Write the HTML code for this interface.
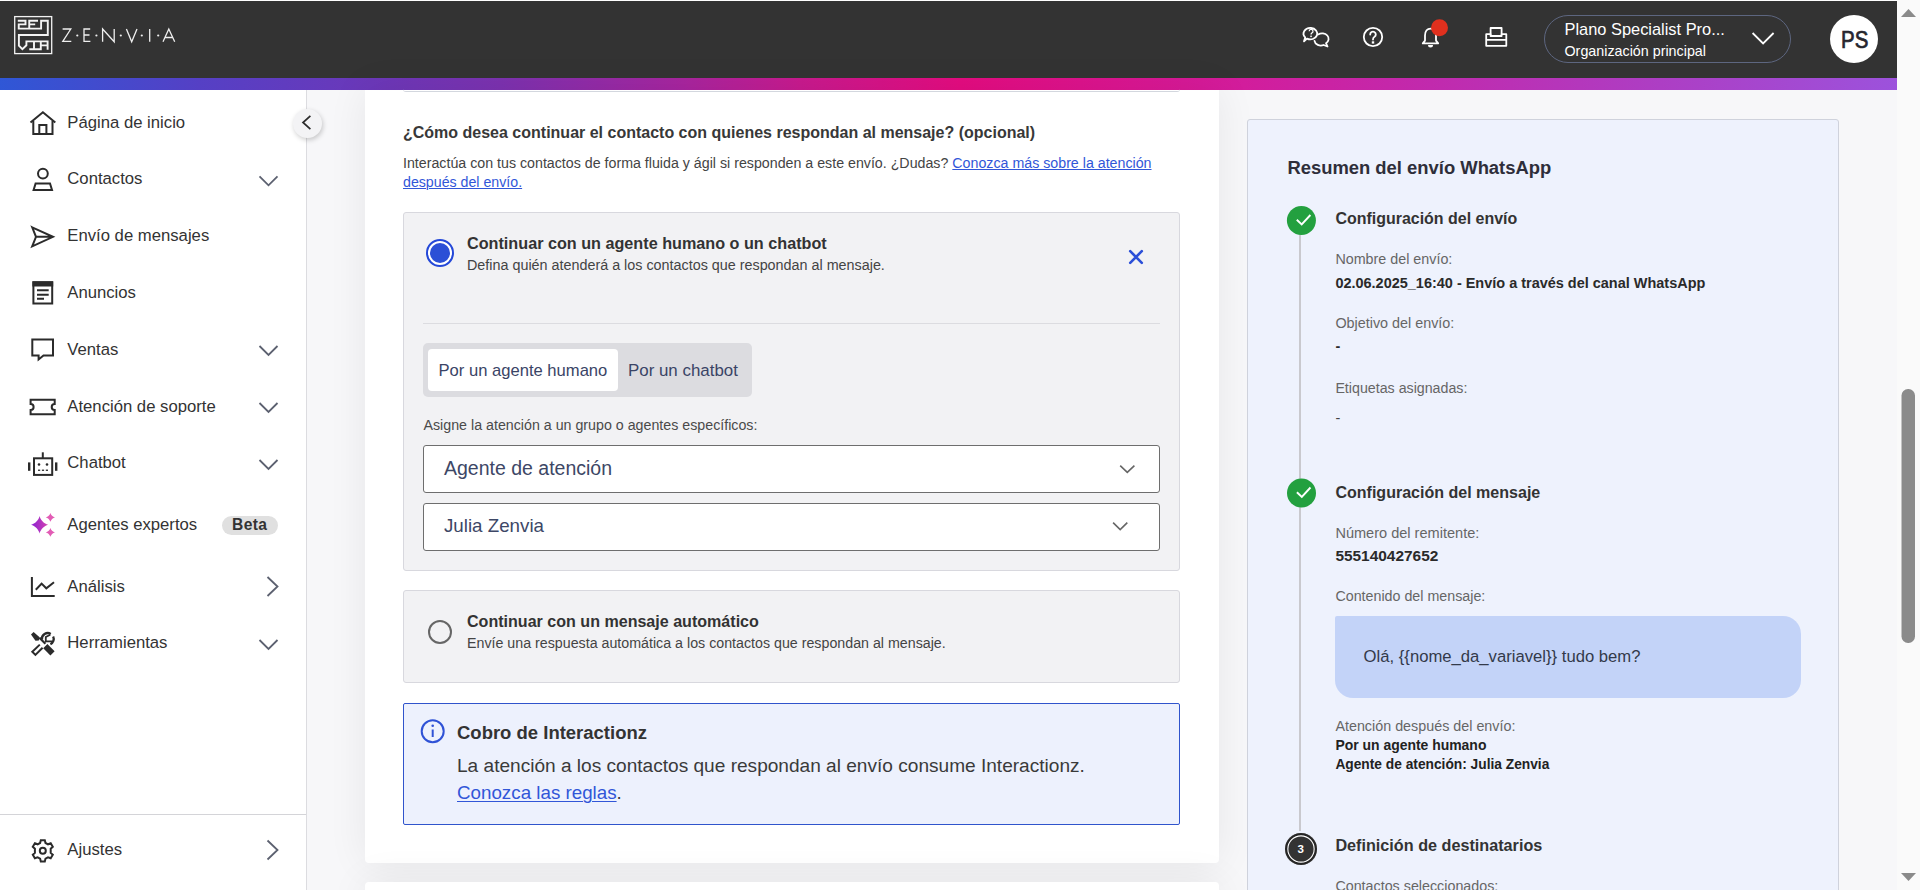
<!DOCTYPE html>
<html><head><meta charset="utf-8"><style>
*{box-sizing:border-box;margin:0;padding:0}
html,body{width:1920px;height:890px;overflow:hidden;background:#fff;font-family:"Liberation Sans",sans-serif;color:#333}
.a{position:absolute}
.t{position:absolute;white-space:nowrap;line-height:1}
svg{position:absolute;left:0;top:0;overflow:visible}
a{color:inherit}
</style></head><body>
<div class="a" style="left:0px;top:1px;width:1897px;height:77px;background:#333333"></div>
<div class="a" style="left:0px;top:78px;width:1897px;height:12px;background:linear-gradient(90deg,#2f57d6 0%,#5540c5 10.5%,#7c32b0 26.4%,#a8259f 36%,#c81a8e 42.2%,#e40c80 50.6%,#d61a98 63.3%,#c12aad 75.4%,#ad3ec4 87.5%,#9c52dc 100%)"></div>
<div class="a" style="left:0px;top:90px;width:306px;height:800px;background:#fff"></div>
<div class="a" style="left:306px;top:90px;width:1px;height:800px;background:#dcdce0"></div>
<div class="a" style="left:307px;top:90px;width:1590px;height:800px;background:#f7f7f9"></div>
<div class="a" style="left:1897px;top:0px;width:23px;height:890px;background:#fafafa"></div>
<svg width="1920" height="890" style="pointer-events:none"><path d="M1901,17 L1908.5,9 L1916,17 Z" fill="#8a8a8a"/><path d="M1901,873 L1908.5,881 L1916,873 Z" fill="#8a8a8a"/><rect x="1901.5" y="389" width="13.5" height="254" rx="6.5" fill="#8b8b8b"/></svg>
<svg width="1920" height="890"><g fill="none" stroke="#f2f2f2" stroke-width="1.3"><rect x="14.7" y="16.6" width="37" height="37"/></g><g fill="none" stroke="#f4f4f4" stroke-width="1.9" stroke-linejoin="miter" stroke-linecap="butt"><path d="M17.8,20.75 H25.5 V24.4 H18.75 V28.6 H41.1 V20.75 H47.8 V35 H18.9 V45.6 L22.4,49.2 L26.4,45.3 V41.4 H47.6 V49.8"/><path d="M38,20.75 H29.25 V28.6 M29.25,24.4 H35.2"/><path d="M34,41.4 V49.3 M29.3,49.3 H40.8 V41.4 M40.8,45.35 H47.6"/></g><g fill="none" stroke="#efefef" stroke-width="1.3" stroke-linejoin="miter"><path d="M62.6,29 H70.8 L62.8,41.3 H71.3"/><path d="M90.2,29 H84 V41.3 H90.4 M84,35 H89.5"/><path d="M102.6,41.8 V29 L114.2,41.8 V29"/><path d="M126.4,29 L131.7,41.8 L137,29"/><path d="M149.7,29 V41.8"/><path d="M163,41.8 L168.8,29 L174.7,41.8 M165.2,37.5 H172.5"/></g><g fill="#efefef"><circle cx="77.3" cy="35.5" r="1.1"/><circle cx="96.4" cy="35.5" r="1.1"/><circle cx="120.8" cy="35.5" r="1.1"/><circle cx="141.8" cy="35.5" r="1.1"/><circle cx="158.2" cy="35.5" r="1.1"/></g></svg>
<svg width="1920" height="890"><g fill="none" stroke="#fff" stroke-width="1.8" stroke-linejoin="round" stroke-linecap="round"><path d="M1311,28 A6.8,5.7 0 1 1 1307,38.6 L1304,41.3 L1305.2,37.4 A6.8,5.7 0 0 1 1311,28 Z"/><path d="M1318.2,34.4 A6.4,5.4 0 0 1 1326,43.2 L1327.5,46.5 L1323.6,45 A6.4,5.4 0 0 1 1314.5,40.8"/><circle cx="1373" cy="37" r="9.2"/><path d="M1370.2,34.5 A2.8,2.8 0 1 1 1374.5,36.8 C1373.3,37.5 1373,38 1373,39.5"/><path d="M1422.8,43.4 L1425,40.6 V35.5 C1425,31.2 1427.4,28.6 1430.5,28.6 C1433.6,28.6 1436,31.2 1436,35.5 V40.6 L1438.2,43.4 Z"/><rect x="1490.6" y="28" width="11" height="8"/><path d="M1490.6,34.2 H1486.2 V45.8 H1506.3 V34.2 H1501.6 M1486.2,39.9 H1506.3"/></g><g fill="#fff"><path d="M1371.8,41.3 h2.4 v2.3 h-2.4z"/><path d="M1309.2,31.3 a1.9,1.9 0 1 1 2.5,1.8 c-.5,.3 -.6,.6 -.6,1.4" fill="none" stroke="#fff" stroke-width="1.3"/><rect x="1310.3" y="35.6" width="1.5" height="1.5"/><path d="M1428,45 h5 a2.5,2.5 0 0 1 -5,0z"/></g><circle cx="1439.5" cy="27.8" r="8.5" fill="#e0301e"/></svg>
<div class="a" style="left:1544px;top:15px;width:247px;height:48px;border:1px solid #5d6680;border-radius:24px"></div>
<div class="t" style="left:1564.5px;top:21.42px;font-size:16.4px;font-weight:400;color:#ffffff;">Plano Specialist Pro...</div>
<div class="t" style="left:1564.5px;top:43.90px;font-size:14.3px;font-weight:400;color:#ffffff;">Organización principal</div>
<svg width="1920" height="890"><path d="M1752.6,33 L1763.1,43.4 L1773.6,33" fill="none" stroke="#fff" stroke-width="1.8"/></svg>
<div class="a" style="left:1830px;top:14.7px;width:48px;height:48px;background:#fff;border-radius:50%"></div>
<div class="t" style="left:1840.5px;top:28.71px;font-size:23.5px;font-weight:400;color:#26262e;transform:scaleX(0.87);transform-origin:0 0;-webkit-text-stroke:0.7px #26262e">PS</div>
<div class="t" style="left:67.3px;top:114.86px;font-size:16.7px;font-weight:400;color:#333333;">Página de inicio</div>
<div class="t" style="left:67.3px;top:170.86px;font-size:16.7px;font-weight:400;color:#333333;">Contactos</div>
<div class="t" style="left:67.3px;top:227.86px;font-size:16.7px;font-weight:400;color:#333333;">Envío de mensajes</div>
<div class="t" style="left:67.3px;top:284.86px;font-size:16.7px;font-weight:400;color:#333333;">Anuncios</div>
<div class="t" style="left:67.3px;top:341.86px;font-size:16.7px;font-weight:400;color:#333333;">Ventas</div>
<div class="t" style="left:67.3px;top:398.86px;font-size:16.7px;font-weight:400;color:#333333;">Atención de soporte</div>
<div class="t" style="left:67.3px;top:454.86px;font-size:16.7px;font-weight:400;color:#333333;">Chatbot</div>
<div class="t" style="left:67.3px;top:516.86px;font-size:16.7px;font-weight:400;color:#333333;">Agentes expertos</div>
<div class="t" style="left:67.3px;top:578.86px;font-size:16.7px;font-weight:400;color:#333333;">Análisis</div>
<div class="t" style="left:67.3px;top:634.86px;font-size:16.7px;font-weight:400;color:#333333;">Herramientas</div>
<div class="t" style="left:67.3px;top:841.86px;font-size:16.7px;font-weight:400;color:#333333;">Ajustes</div>
<div class="a" style="left:0px;top:814px;width:306px;height:1px;background:#d4d4d8"></div>
<div class="a" style="left:222px;top:516px;width:56px;height:19px;background:#e0e0e0;border-radius:10px"></div>
<div class="t" style="left:232px;top:517.29px;font-size:15.6px;font-weight:700;color:#333333;letter-spacing:0.4px">Beta</div>
<svg width="1920" height="890"><g fill="none" stroke="#2b2b2b" stroke-width="2" stroke-linejoin="miter"><path d="M30.5,122.5 L42.9,112.2 L55.3,122.5"/><path d="M33.3,121 V134 H52.5 V121"/><path d="M39.3,134 V125 H46.4 V134"/><circle cx="42.9" cy="173.6" r="4.9"/><path d="M35.6,183.4 H50 L52,190 H33.6 Z"/><path d="M32.2,227.3 L53,236.8 L32.2,246.3 L36,236.8 Z M36,236.8 H53"/><rect x="33.4" y="282.3" width="18.8" height="21.2"/><path d="M37,290.2 H48.7 M37,294.8 H48.7 M37,298.8 H44"/><path d="M32.3,339.4 H53 V355.5 H43.5 L38.6,359.5 V355.5 H32.3 Z"/><path d="M30.6,399.8 H54.7 V404 A3,3 0 0 0 54.7,410 V414.2 H30.6 V410 A3,3 0 0 0 30.6,404 Z"/><rect x="34" y="458.3" width="18.2" height="16.6"/><path d="M42.8,452.3 V458.3"/><path d="M31.9,577 V596 H54.7"/><path d="M35.8,589.8 L41.6,583.6 L46.3,588.3 L54,582.2"/></g><g fill="#2b2b2b"><rect x="28" y="462.4" width="2.4" height="8.4"/><rect x="55" y="462.4" width="2.4" height="8.4"/><circle cx="39" cy="464.5" r="1.3"/><circle cx="47" cy="464.5" r="1.3"/><rect x="38" y="469.6" width="2.2" height="1.3"/><rect x="41.9" y="469.6" width="2.2" height="1.3"/><rect x="45.8" y="469.6" width="2.2" height="1.3"/><rect x="32.4" y="281.3" width="20.8" height="5.2"/></g><g fill="#2b2b2b"><path d="M31,634.6 L33.6,632.1 L39.6,637.3 L38.8,640.6 L35.5,640.7 Z"/><path d="M38.6,638.6 L40.2,637 L46.2,643 L44.6,644.6 Z"/><path d="M43.2,648.2 L47.4,644.1 L54.6,651.3 L50.4,655.5 Z"/></g><g fill="none" stroke="#2b2b2b" stroke-width="2.3"><path d="M41.9,639.6 A5.9,5.9 0 0 1 50.75,633.9 M53.15,636.5 A5.9,5.9 0 0 1 50.4,644.3"/></g><g fill="none" stroke="#2b2b2b" stroke-width="1.8"><path d="M50.3,634.8 L45.8,637 V641.4 H52.6"/></g><g fill="none" stroke="#2b2b2b" stroke-width="2"><path d="M39.8,644.6 L32.3,651.8 L35.4,654.9 L42.6,647.7"/></g><g fill="none" stroke="#2b2b2b" stroke-width="2" stroke-linejoin="miter"><circle cx="42.8" cy="850.8" r="3"/><path d="M40.8,840.2 H44.8 L45.5,843 L48,844.3 L50.7,843.3 L52.8,846.8 L50.7,848.7 V852.9 L52.8,854.8 L50.7,858.3 L48,857.3 L45.5,858.6 L44.8,861.4 H40.8 L40.1,858.6 L37.6,857.3 L34.9,858.3 L32.8,854.8 L34.9,852.9 V848.7 L32.8,846.8 L34.9,843.3 L37.6,844.3 L40.1,843 Z"/></g><defs><linearGradient id="sg" x1="0" y1="0" x2="1" y2="0"><stop offset="0" stop-color="#8a22d2"/><stop offset="1" stop-color="#d443b2"/></linearGradient></defs><path d="M39.60,516.00 C40.45,519.96 44.28,523.92 48.10,524.80 C44.28,525.68 40.45,529.64 39.60,533.60 C38.75,529.64 34.92,525.68 31.10,524.80 C34.92,523.92 38.75,519.96 39.60,516.00 Z" fill="url(#sg)"/><path d="M50.40,513.00 C50.86,514.98 52.93,516.96 55.00,517.40 C52.93,517.84 50.86,519.82 50.40,521.80 C49.94,519.82 47.87,517.84 45.80,517.40 C47.87,516.96 49.94,514.98 50.40,513.00 Z" fill="#e25cb5"/><path d="M50.40,528.00 C50.86,529.98 52.93,531.96 55.00,532.40 C52.93,532.84 50.86,534.82 50.40,536.80 C49.94,534.82 47.87,532.84 45.80,532.40 C47.87,531.96 49.94,529.98 50.40,528.00 Z" fill="#e25cb5"/><g fill="none" stroke="#5c6170" stroke-width="1.8"><path d="M259.5,176.3 L268.5,185.3 L277.5,176.3"/><path d="M259.5,346 L268.5,355 L277.5,346"/><path d="M259.5,403 L268.5,412 L277.5,403"/><path d="M259.5,460 L268.5,469 L277.5,460"/><path d="M259.5,640 L268.5,649 L277.5,640"/><path d="M267.5,577 L277.5,586.5 L267.5,596"/><path d="M267.5,840.5 L277.5,850 L267.5,859.5"/></g></svg>
<div class="a" style="left:293px;top:109px;width:29px;height:29px;background:#f3f3f5;border-radius:50%;box-shadow:1px 2px 5px rgba(0,0,0,.2)"></div>
<svg width="1920" height="890"><path d="M310.4,115.8 L303,122.5 L310.4,129.2" fill="none" stroke="#2b2b2b" stroke-width="1.7"/></svg>
<div class="a" style="left:365px;top:90px;width:854px;height:772.5px;background:#fff;border-radius:0 0 4px 4px;box-shadow:0 0 40px rgba(0,0,0,.07)"></div>
<div class="a" style="left:365px;top:882px;width:854px;height:40px;background:#fff;border-radius:4px;box-shadow:0 0 40px rgba(0,0,0,.07)"></div>
<div class="a" style="left:403px;top:89px;width:777px;height:2.6px;border-bottom:1.6px solid #d3d7de;border-radius:0 0 3px 3px"></div>
<div class="t" style="left:403px;top:125.06px;font-size:16px;font-weight:700;color:#383838;">¿Cómo desea continuar el contacto con quienes respondan al mensaje? (opcional)</div>
<div class="t" style="left:403px;top:155.95px;font-size:14.23px;font-weight:400;color:#444;">Interactúa con tus contactos de forma fluida y ágil si responden a este envío. ¿Dudas? <u style="color:#3156d8;text-decoration-thickness:1.3px;text-underline-offset:1px">Conozca más sobre la atención</u></div>
<div class="t" style="left:403px;top:174.98px;font-size:14.2px;font-weight:400;color:#3156d8;"><u style="text-decoration-thickness:1.3px;text-underline-offset:1px">después del envío.</u></div>
<div class="a" style="left:403px;top:212px;width:777px;height:358.5px;background:#f2f2f4;border:1px solid #d8d8de;border-radius:3px"></div>
<svg width="1920" height="890"><circle cx="440" cy="253" r="13" fill="#fff" stroke="#2448d8" stroke-width="2"/><circle cx="440" cy="253" r="10" fill="#2c50d6"/></svg>
<div class="t" style="left:467px;top:235.09px;font-size:16.2px;font-weight:700;color:#333333;">Continuar con un agente humano o un chatbot</div>
<div class="t" style="left:467px;top:257.85px;font-size:14.35px;font-weight:400;color:#444444;">Defina quién atenderá a los contactos que respondan al mensaje.</div>
<svg width="1920" height="890"><path d="M1130.2,251.2 L1141.8,262.8 M1141.8,251.2 L1130.2,262.8" fill="none" stroke="#2b4fd8" stroke-width="2.6" stroke-linecap="round"/></svg>
<div class="a" style="left:423px;top:323px;width:737px;height:1px;background:#dcdce0"></div>
<div class="a" style="left:423px;top:343px;width:329px;height:54px;background:#dcdce0;border-radius:5px"></div>
<div class="a" style="left:428px;top:349px;width:190px;height:42px;background:#fff;border-radius:4px"></div>
<div class="t" style="left:438.5px;top:363.25px;font-size:16.6px;font-weight:400;color:#3a4466;">Por un agente humano</div>
<div class="t" style="left:628px;top:362.99px;font-size:16.9px;font-weight:400;color:#3a4466;">Por un chatbot</div>
<div class="t" style="left:423.5px;top:418.25px;font-size:14.24px;font-weight:400;color:#4a4a4a;">Asigne la atención a un grupo o agentes específicos:</div>
<div class="a" style="left:423px;top:445px;width:737px;height:48px;background:#fff;border:1.3px solid #6e6e6e;border-radius:3px"></div>
<div class="t" style="left:444px;top:458.99px;font-size:19.5px;font-weight:400;color:#3d4766;">Agente de atención</div>
<div class="a" style="left:423px;top:503px;width:737px;height:48px;background:#fff;border:1.3px solid #6e6e6e;border-radius:3px"></div>
<div class="t" style="left:444px;top:516.74px;font-size:18.74px;font-weight:400;color:#3d4766;">Julia Zenvia</div>
<svg width="1920" height="890"><g fill="none" stroke="#666" stroke-width="1.6"><path d="M1120.2,465.6 L1127.3,472.4 L1134.4,465.6"/><path d="M1113.1,522.6 L1120.2,529.6 L1127.3,522.6"/></g></svg>
<div class="a" style="left:403px;top:590px;width:777px;height:93px;background:#f2f2f4;border:1px solid #d8d8de;border-radius:3px"></div>
<svg width="1920" height="890"><circle cx="440" cy="632" r="11" fill="none" stroke="#666" stroke-width="2"/></svg>
<div class="t" style="left:467px;top:613.20px;font-size:16.07px;font-weight:700;color:#333333;">Continuar con un mensaje automático</div>
<div class="t" style="left:467px;top:635.55px;font-size:14.24px;font-weight:400;color:#444444;">Envíe una respuesta automática a los contactos que respondan al mensaje.</div>
<div class="a" style="left:403px;top:703px;width:777px;height:122px;background:#edf1fd;border:1px solid #3054cc;border-radius:2px"></div>
<svg width="1920" height="890"><g fill="none" stroke="#2f52d6" stroke-width="2"><circle cx="432.7" cy="731.3" r="11"/><path d="M432.7,729.5 V737"/></g><circle cx="432.7" cy="725.8" r="1.3" fill="#2f52d6"/></svg>
<div class="t" style="left:457px;top:723.75px;font-size:18.49px;font-weight:700;color:#333333;">Cobro de Interactionz</div>
<div class="t" style="left:457px;top:756.45px;font-size:19.08px;font-weight:400;color:#3a3a3a;">La atención a los contactos que respondan al envío consume Interactionz.</div>
<div class="t" style="left:457px;top:784.11px;font-size:18.77px;font-weight:400;color:#3a3a3a;"><u style="color:#3156d8;text-decoration-thickness:1.2px;text-underline-offset:1.5px">Conozca las reglas</u>.</div>
<div class="a" style="left:1247px;top:119px;width:592px;height:800px;background:#eef2fd;border:1px solid #cfd2dc;border-radius:3px"></div>
<div class="t" style="left:1287.4px;top:158.71px;font-size:18.42px;font-weight:700;color:#2e2e3a;">Resumen del envío WhatsApp</div>
<div class="a" style="left:1299px;top:234px;width:2px;height:597px;background:#c9c9ce"></div>
<svg width="1920" height="890"><circle cx="1301.4" cy="220.5" r="14.5" fill="#23a03f"/><path d="M1296.8,219.7 L1301.7,224.4 L1310.4,215.0" fill="none" stroke="#fff" stroke-width="1.9"/></svg>
<div class="t" style="left:1335.4px;top:210.67px;font-size:15.98px;font-weight:700;color:#333333;">Configuración del envío</div>
<div class="t" style="left:1335.4px;top:251.88px;font-size:14.32px;font-weight:400;color:#666666;">Nombre del envío:</div>
<div class="t" style="left:1335.4px;top:275.55px;font-size:14.47px;font-weight:700;color:#2a2a2a;">02.06.2025_16:40 - Envío a través del canal WhatsApp</div>
<div class="t" style="left:1335.4px;top:316.14px;font-size:14.37px;font-weight:400;color:#666666;">Objetivo del envío:</div>
<div class="t" style="left:1335.4px;top:338.81px;font-size:14.4px;font-weight:700;color:#2a2a2a;">-</div>
<div class="t" style="left:1335.4px;top:380.76px;font-size:14.22px;font-weight:400;color:#666666;">Etiquetas asignadas:</div>
<div class="t" style="left:1335.4px;top:410.81px;font-size:14.4px;font-weight:400;color:#444;">-</div>
<svg width="1920" height="890"><circle cx="1301.5" cy="493" r="14.5" fill="#23a03f"/><path d="M1296.9,492.2 L1301.8,496.9 L1310.5,487.5" fill="none" stroke="#fff" stroke-width="1.9"/></svg>
<div class="t" style="left:1335.4px;top:483.92px;font-size:16.04px;font-weight:700;color:#333333;">Configuración del mensaje</div>
<div class="t" style="left:1335.4px;top:526.07px;font-size:14.56px;font-weight:400;color:#666666;">Número del remitente:</div>
<div class="t" style="left:1335.4px;top:547.94px;font-size:15.43px;font-weight:700;color:#2a2a2a;">555140427652</div>
<div class="t" style="left:1335.4px;top:588.81px;font-size:14.28px;font-weight:400;color:#666666;">Contenido del mensaje:</div>
<div class="a" style="left:1335px;top:616px;width:466px;height:82px;background:#c3d3f8;border-radius:2px 18px 18px 18px"></div>
<div class="t" style="left:1363.6px;top:648.80px;font-size:16.66px;font-weight:400;color:#333a4a;">Olá, {{nome_da_variavel}} tudo bem?</div>
<div class="t" style="left:1335.4px;top:719.37px;font-size:14.33px;font-weight:400;color:#666666;">Atención después del envío:</div>
<div class="t" style="left:1335.4px;top:738.90px;font-size:13.94px;font-weight:700;color:#222222;">Por un agente humano</div>
<div class="t" style="left:1335.4px;top:758.16px;font-size:13.75px;font-weight:700;color:#222222;">Agente de atención: Julia Zenvia</div>
<div class="a" style="left:1285px;top:833px;width:32px;height:32px;background:#333;border-radius:50%;box-shadow:inset 0 0 0 2.3px #262626, inset 0 0 0 3.4px #fff"></div>
<div class="t" style="left:1297.6px;top:843.87px;font-size:11.5px;font-weight:700;color:#fff;">3</div>
<div class="t" style="left:1335.4px;top:836.89px;font-size:16.2px;font-weight:700;color:#333333;">Definición de destinatarios</div>
<div class="t" style="left:1335.4px;top:878.90px;font-size:14.3px;font-weight:400;color:#666666;">Contactos seleccionados:</div>
</body></html>
